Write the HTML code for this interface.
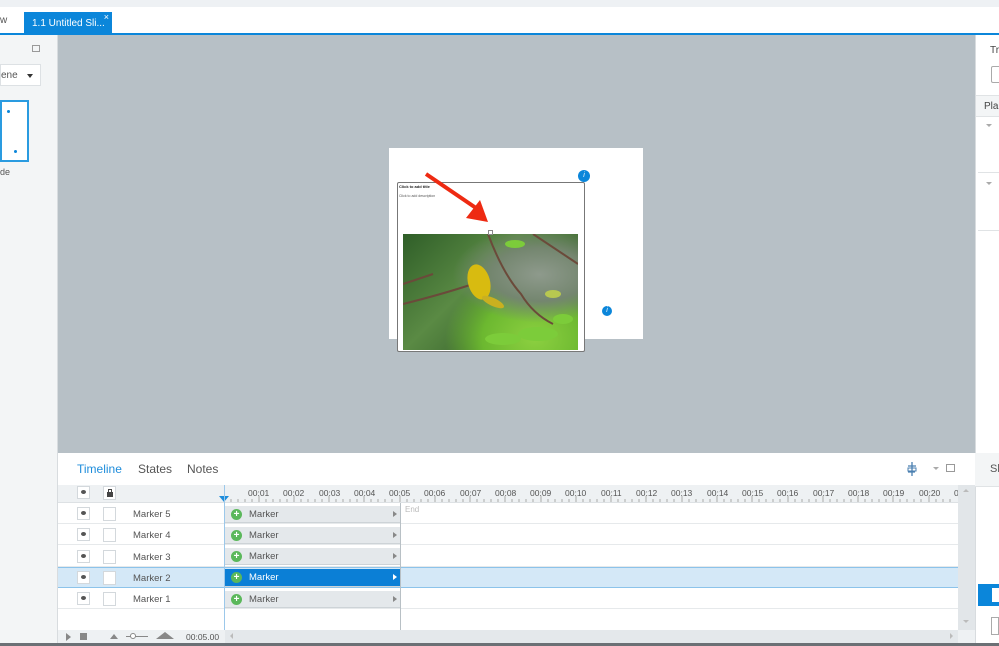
<!DOCTYPE html>
<html><head><meta charset="utf-8"><style>
*{margin:0;padding:0;box-sizing:border-box}
body{width:999px;height:646px;overflow:hidden;position:relative;background:#fff;font-family:"Liberation Sans",sans-serif;font-size:9px;color:#555}
.a{position:absolute}
.eye{position:absolute;width:13px;height:13px;border:1px solid #d3d8dc;background:#fff}
.eye:after{content:"";position:absolute;left:3px;top:3px;width:5px;height:4px;border-radius:50%;background:#555}
.lk{position:absolute;width:13px;height:14px;border:1px solid #d3d8dc;background:#fff}
.row{position:absolute;left:58px;width:900px;height:21px;border-bottom:1px solid #e6e9eb}
.bar{position:absolute;left:225px;width:175px;height:17px;background:#e4e8eb;border-bottom:1px solid #cdd3d7}
.bar .p{position:absolute;left:6px;top:3px;width:11px;height:11px;border-radius:50%;background:#5bb85b;color:#fff;font-size:10px;line-height:11px;text-align:center;font-weight:bold}
.bar .t{position:absolute;left:24px;top:3px;font-size:9.5px;color:#555}
.bar .r{position:absolute;right:3px;top:5px;width:0;height:0;border-left:4px solid #888;border-top:3px solid transparent;border-bottom:3px solid transparent}
.tc{position:absolute;top:488px;font-size:8.5px;color:#555}
</style></head><body>
<div class="a" style="left:0;top:0;width:999px;height:7px;background:#eef1f4"></div>
<div class="a" style="left:0;top:7px;width:999px;height:27px;background:#fff"></div>
<div class="a" style="left:0;top:15px;font-size:10px;color:#555">w</div>
<div class="a" style="left:24px;top:12px;width:88px;height:22px;background:#0b86da;color:#fff;font-size:10px;padding:6px 0 0 8px">1.1 Untitled Sli...<span style="position:absolute;right:3px;top:0;font-size:9px">×</span></div>
<div class="a" style="left:0;top:33px;width:999px;height:2px;background:#0b86da"></div>
<div class="a" style="left:0;top:35px;width:58px;height:418px;background:#f3f5f6;border-right:1px solid #d8dcdf"></div>
<div class="a" style="left:32px;top:45px;width:8px;height:7px;border:1px solid #999"></div>
<div class="a" style="left:0;top:64px;width:41px;height:22px;background:#fff;border:1px solid #dde1e4;font-size:10px;padding:5px 0 0 0">ene<span style="position:absolute;right:7px;top:9px;border-left:3px solid transparent;border-right:3px solid transparent;border-top:4px solid #333"></span></div>
<div class="a" style="left:0;top:100px;width:29px;height:62px;background:#fff;border:2px solid #2a9be0"></div>
<div class="a" style="left:7px;top:110px;width:3px;height:3px;border-radius:50%;background:#0b86da"></div>
<div class="a" style="left:14px;top:150px;width:3px;height:3px;border-radius:50%;background:#0b86da"></div>
<div class="a" style="left:0;top:167px;font-size:9px">de</div>
<div class="a" style="left:0;top:453px;width:58px;height:193px;background:#f3f5f6;border-right:1px solid #d8dcdf"></div>
<div class="a" style="left:58px;top:35px;width:917px;height:418px;background:#b7c0c6"></div>
<div class="a" style="left:389px;top:148px;width:254px;height:191px;background:#fff"></div>
<div class="a" style="left:397px;top:182px;width:188px;height:170px;background:#fff;border:1px solid #777;border-radius:2px"></div>
<div class="a" style="left:399px;top:184px;font-size:4px;font-weight:bold;color:#222">Click to add title</div>
<div class="a" style="left:399px;top:194px;font-size:3.5px;color:#555">Click to add description</div>
<div class="a" style="left:403px;top:234px;width:175px;height:116px;overflow:hidden;background:radial-gradient(ellipse at 78% 35%,#8e9a8c 0,#74866f 25%,transparent 45%),radial-gradient(ellipse at 75% 90%,#8cd040 0,#6cb830 28%,transparent 48%),linear-gradient(135deg,#2f5e28,#5a8a44 40%,#3a662e 70%,#50763c)">
<svg width="175" height="116"><g stroke="#6b4a3a" stroke-width="2" fill="none"><path d="M85 0 Q100 40 118 60 Q130 80 150 90"/><path d="M0 70 Q40 60 70 50"/><path d="M130 0 L175 30"/><path d="M0 50 L30 40"/></g>
<g fill="#7ccc3a"><ellipse cx="112" cy="10" rx="10" ry="4"/><ellipse cx="150" cy="60" rx="8" ry="4" fill="#b8c850"/><ellipse cx="135" cy="100" rx="20" ry="7"/><ellipse cx="100" cy="105" rx="18" ry="6"/><ellipse cx="160" cy="85" rx="10" ry="5"/></g>
<ellipse cx="76" cy="48" rx="11" ry="18" fill="#d8bb10" transform="rotate(-15 76 48)"/><ellipse cx="90" cy="68" rx="12" ry="4" fill="#c9b020" transform="rotate(25 90 68)"/></svg></div>
<div class="a" style="left:488px;top:230px;width:5px;height:5px;background:#fff;border:1px solid #888"></div>
<svg class="a" style="left:420px;top:170px" width="80" height="60"><line x1="6" y1="4" x2="56" y2="38" stroke="#ee2a12" stroke-width="4"/><polygon points="46,48 68,52 60,30" fill="#ee2a12"/></svg>
<div class="a" style="left:578px;top:170px;width:12px;height:12px;border-radius:50%;background:#0b86da;color:#fff;font-size:7px;text-align:center;line-height:12px;font-style:italic">i</div>
<div class="a" style="left:602px;top:306px;width:10px;height:10px;border-radius:50%;background:#0b86da;color:#fff;font-size:7px;text-align:center;line-height:10px;font-style:italic">i</div>
<div class="a" style="left:975px;top:35px;width:24px;height:611px;background:#fff;border-left:1px solid #d8dcdf"></div>
<div class="a" style="left:990px;top:45px;font-size:10px;color:#444">Tr</div>
<div class="a" style="left:991px;top:66px;width:10px;height:17px;border:1px solid #aaa;border-radius:2px"></div>
<div class="a" style="left:976px;top:95px;width:23px;height:22px;background:#f3f5f6;border-top:1px solid #e0e3e5;border-bottom:1px solid #e0e3e5;font-size:10px;padding:5px 0 0 8px;color:#444">Pla</div>
<div class="a" style="left:986px;top:124px;border-left:3px solid transparent;border-right:3px solid transparent;border-top:3px solid #aaa"></div>
<div class="a" style="left:978px;top:172px;width:21px;height:1px;background:#e0e3e5"></div>
<div class="a" style="left:986px;top:182px;border-left:3px solid transparent;border-right:3px solid transparent;border-top:3px solid #aaa"></div>
<div class="a" style="left:978px;top:230px;width:21px;height:1px;background:#e0e3e5"></div>
<div class="a" style="left:975px;top:453px;width:24px;height:34px;background:#f3f5f6;border-bottom:1px solid #e0e3e5;font-size:11px;padding:10px 0 0 15px;color:#555">Sl</div>
<div class="a" style="left:978px;top:584px;width:21px;height:22px;background:#0b86da"></div>
<div class="a" style="left:992px;top:588px;width:7px;height:14px;background:#fff"></div>
<div class="a" style="left:991px;top:617px;width:8px;height:18px;border:1px solid #aaa"></div>
<div class="a" style="left:58px;top:453px;width:917px;height:32px;background:#fff"></div>
<div class="a" style="left:77px;top:462px;font-size:12px;color:#1f8ddb">Timeline</div>
<div class="a" style="left:138px;top:462px;font-size:12px;color:#555">States</div>
<div class="a" style="left:187px;top:462px;font-size:12px;color:#555">Notes</div>
<svg class="a" style="left:906px;top:462px" width="12" height="14"><path d="M6 0V14M2 4H10M2 10H9" stroke="#4a7fb0" stroke-width="1.3" fill="none"/><rect x="2" y="6" width="8" height="3" fill="none" stroke="#4a7fb0"/></svg>
<div class="a" style="left:933px;top:467px;border-left:3px solid transparent;border-right:3px solid transparent;border-top:3px solid #aaa"></div>
<div class="a" style="left:946px;top:464px;width:9px;height:8px;border:1px solid #999"></div>
<div class="a" style="left:58px;top:485px;width:900px;height:18px;background:#eef1f3;border-bottom:1px solid #dde1e4"></div>
<div class="eye" style="left:77px;top:486px"></div>
<div class="lk" style="left:103px;top:486px"><div style="position:absolute;left:3px;top:5px;width:6px;height:5px;background:#444"></div><div style="position:absolute;left:4px;top:2px;width:4px;height:4px;border:1px solid #444;border-bottom:none"></div></div>
<div class="a" style="left:219px;top:496px;border-left:5px solid transparent;border-right:5px solid transparent;border-top:6px solid #1f8ddb"></div>
<svg class="a" style="left:224px;top:496px" width="735" height="6"><g stroke="#aaa">
<path d="M7 6V3M14 6V3M21 6V3M28 6V3M35 6V0M42 6V3M49 6V3M56 6V3M63 6V3M70 6V0M77 6V3M84 6V3M91 6V3M98 6V3M105 6V0M112 6V3M119 6V3M126 6V3M133 6V3M140 6V0M147 6V3M154 6V3M161 6V3M168 6V3M176 6V0M183 6V3M190 6V3M197 6V3M204 6V3M211 6V0M218 6V3M225 6V3M232 6V3M239 6V3M246 6V0M253 6V3M260 6V3M267 6V3M274 6V3M281 6V0M288 6V3M295 6V3M302 6V3M309 6V3M317 6V0M324 6V3M331 6V3M338 6V3M345 6V3M352 6V0M359 6V3M366 6V3M373 6V3M380 6V3M387 6V0M394 6V3M401 6V3M408 6V3M415 6V3M422 6V0M429 6V3M436 6V3M443 6V3M450 6V3M458 6V0M465 6V3M472 6V3M479 6V3M486 6V3M493 6V0M500 6V3M507 6V3M514 6V3M521 6V3M528 6V0M535 6V3M542 6V3M549 6V3M556 6V3M564 6V0M571 6V3M578 6V3M585 6V3M592 6V3M599 6V0M606 6V3M613 6V3M620 6V3M627 6V3M634 6V0M641 6V3M648 6V3M655 6V3M662 6V3M669 6V0M676 6V3M683 6V3M690 6V3M697 6V3M705 6V0M712 6V3M719 6V3M726 6V3"/></g></svg>
<div class="tc" style="left:248px">00:01</div><div class="tc" style="left:283px">00:02</div><div class="tc" style="left:319px">00:03</div><div class="tc" style="left:354px">00:04</div><div class="tc" style="left:389px">00:05</div><div class="tc" style="left:424px">00:06</div><div class="tc" style="left:460px">00:07</div><div class="tc" style="left:495px">00:08</div><div class="tc" style="left:530px">00:09</div><div class="tc" style="left:565px">00:10</div><div class="tc" style="left:601px">00:11</div><div class="tc" style="left:636px">00:12</div><div class="tc" style="left:671px">00:13</div><div class="tc" style="left:707px">00:14</div><div class="tc" style="left:742px">00:15</div><div class="tc" style="left:777px">00:16</div><div class="tc" style="left:813px">00:17</div><div class="tc" style="left:848px">00:18</div><div class="tc" style="left:883px">00:19</div><div class="tc" style="left:919px">00:20</div><div class="tc" style="left:954px">0</div>
<div class="row" style="top:503px"></div>
<div class="row" style="top:524px"></div>
<div class="row" style="top:546px"></div>
<div class="row" style="top:567px;background:#d4e8f7;border-top:1px solid #8cc3ea;border-bottom:1px solid #8cc3ea"></div>
<div class="row" style="top:588px"></div>
<div class="a" style="left:224px;top:485px;width:1px;height:145px;background:#9cc8ea"></div>
<div class="a" style="left:400px;top:503px;width:1px;height:127px;background:#b8c0c5"></div>
<div class="a" style="left:405px;top:505px;font-size:8px;color:#bbb">End</div>
<div class="eye" style="left:77px;top:507px"></div><div class="lk" style="left:103px;top:507px"></div><div class="a" style="left:133px;top:509px;font-size:9.5px">Marker 5</div>
<div class="eye" style="left:77px;top:528px"></div><div class="lk" style="left:103px;top:528px"></div><div class="a" style="left:133px;top:530px;font-size:9.5px">Marker 4</div>
<div class="eye" style="left:77px;top:550px"></div><div class="lk" style="left:103px;top:550px"></div><div class="a" style="left:133px;top:552px;font-size:9.5px">Marker 3</div>
<div class="eye" style="left:77px;top:571px"></div><div class="lk" style="left:103px;top:571px"></div><div class="a" style="left:133px;top:573px;font-size:9.5px">Marker 2</div>
<div class="eye" style="left:77px;top:592px"></div><div class="lk" style="left:103px;top:592px"></div><div class="a" style="left:133px;top:594px;font-size:9.5px">Marker 1</div>
<div class="bar" style="top:506px"><div class="p">+</div><div class="t">Marker</div><div class="r"></div></div>
<div class="bar" style="top:527px"><div class="p">+</div><div class="t">Marker</div><div class="r"></div></div>
<div class="bar" style="top:548px"><div class="p">+</div><div class="t">Marker</div><div class="r"></div></div>
<div class="bar" style="top:569px;background:#0b7fd6;height:18px"><div class="p">+</div><div class="t" style="color:#fff">Marker</div><div class="r" style="border-left-color:#fff"></div></div>
<div class="bar" style="top:591px"><div class="p">+</div><div class="t">Marker</div><div class="r"></div></div>
<div class="a" style="left:958px;top:485px;width:17px;height:145px;background:#e2e6e9"></div>
<div class="a" style="left:963px;top:489px;border-left:3px solid transparent;border-right:3px solid transparent;border-bottom:3px solid #bbb"></div>
<div class="a" style="left:963px;top:620px;border-left:3px solid transparent;border-right:3px solid transparent;border-top:3px solid #bbb"></div>
<div class="a" style="left:58px;top:630px;width:917px;height:13px;background:#eef1f3"></div>
<div class="a" style="left:225px;top:630px;width:733px;height:13px;background:#e4e8eb"></div>
<div class="a" style="left:66px;top:633px;border-top:4px solid transparent;border-bottom:4px solid transparent;border-left:5px solid #888"></div>
<div class="a" style="left:80px;top:633px;width:7px;height:7px;background:#888"></div>
<div class="a" style="left:110px;top:634px;border-left:4px solid transparent;border-right:4px solid transparent;border-bottom:5px solid #888"></div>
<div class="a" style="left:126px;top:636px;width:22px;height:1px;background:#888"></div>
<div class="a" style="left:130px;top:633px;width:6px;height:6px;border-radius:50%;border:1px solid #888;background:#fff"></div>
<div class="a" style="left:156px;top:632px;border-left:9px solid transparent;border-right:9px solid transparent;border-bottom:7px solid #888"></div>
<div class="a" style="left:186px;top:632px;font-size:8.5px">00:05.00</div>
<div class="a" style="left:230px;top:633px;border-top:3px solid transparent;border-bottom:3px solid transparent;border-right:3px solid #bbb"></div>
<div class="a" style="left:950px;top:633px;border-top:3px solid transparent;border-bottom:3px solid transparent;border-left:3px solid #bbb"></div>
<div class="a" style="left:0;top:643px;width:999px;height:3px;background:#6b7075"></div>
</body></html>
